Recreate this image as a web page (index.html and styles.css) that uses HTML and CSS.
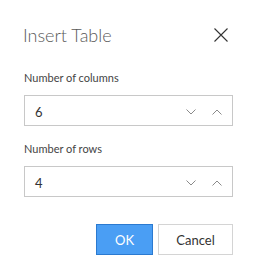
FILE: index.html
```html
<!DOCTYPE html>
<html>
<head>
<meta charset="utf-8">
<link rel="stylesheet" href="styles.css">
</head>
<body>
<div class="dialog">
  <div class="header">
    <h1 class="title">Insert Table</h1>
    <button class="close" aria-label="Close">
      <svg width="14" height="14" viewBox="0 0 14 14"><path d="M0.5 0.5 L13.5 13.5 M13.5 0.5 L0.5 13.5" stroke="#333" stroke-width="1.1" fill="none"/></svg>
    </button>
  </div>
  <div class="field first">
    <label class="label">Number of columns</label>
    <div class="spin">
      <span class="value">6</span>
      <span class="arrows">
        <svg width="10" height="6" viewBox="0 0 10 6"><path d="M0.5 0.5 L5 5 L9.5 0.5" stroke="#8a8a8a" fill="none"/></svg>
        <svg width="10" height="6" viewBox="0 0 10 6"><path d="M0.5 5.5 L5 1 L9.5 5.5" stroke="#8a8a8a" fill="none"/></svg>
      </span>
    </div>
  </div>
  <div class="field">
    <label class="label">Number of rows</label>
    <div class="spin">
      <span class="value">4</span>
      <span class="arrows">
        <svg width="10" height="6" viewBox="0 0 10 6"><path d="M0.5 0.5 L5 5 L9.5 0.5" stroke="#8a8a8a" fill="none"/></svg>
        <svg width="10" height="6" viewBox="0 0 10 6"><path d="M0.5 5.5 L5 1 L9.5 5.5" stroke="#8a8a8a" fill="none"/></svg>
      </span>
    </div>
  </div>
  <div class="actions">
    <button class="btn primary">OK</button>
    <button class="btn">Cancel</button>
  </div>
</div>
</body>
</html>
```
FILE: styles.css
```css
html, body {
  margin: 0;
  padding: 0;
  background: #fff;
}
body {
  width: 254px;
  height: 264px;
  font-family: Lato, "Liberation Sans", sans-serif;
  color: #333;
}
.dialog {
  padding: 22px 21px 0 24px;
}
.header {
  display: flex;
  justify-content: space-between;
  align-items: center;
  height: 26px;
  margin-left: -1px;
}
.title {
  margin: 0;
  font-size: 18px;
  font-weight: 300;
  line-height: 26px;
  color: #5a5a5a;
}
.close {
  border: 0;
  background: none;
  padding: 0;
  margin-right: 5px;
  display: flex;
}
.field.first {
  margin-top: 22px;
}
.field + .field {
  margin-top: 15px;
}
.label {
  display: block;
  font-size: 11px;
  line-height: 16px;
  color: #444;
  margin-bottom: 9px;
}
.spin {
  box-sizing: border-box;
  height: 31px;
  border: 1px solid #c8c8c8;
  display: flex;
  align-items: center;
  padding: 2px 10px 0 10px;
}
.value {
  flex: 1;
  font-size: 13px;
  color: #333;
}
.arrows {
  display: flex;
  gap: 16px;
}
.actions {
  display: flex;
  justify-content: flex-end;
  gap: 5px;
  margin-top: 27px;
}
.btn {
  box-sizing: border-box;
  height: 31px;
  width: 75px;
  border: 1px solid #d4d4d4;
  background: #fff;
  font-family: inherit;
  font-size: 13px;
  color: #333;
  padding: 0;
}
.btn.primary {
  width: 57px;
  background: #4a9ef4;
  border-color: #2b7ad0;
  color: #fff;
}
```
